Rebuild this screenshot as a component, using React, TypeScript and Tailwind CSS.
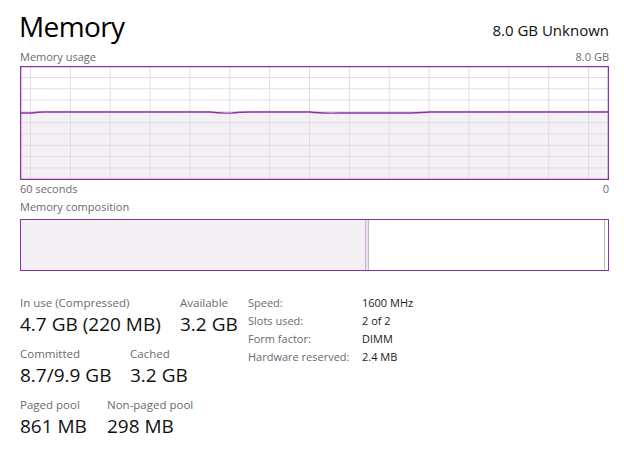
import React from 'react';

const PURPLE = '#8b2fa6';

const UsageChart: React.FC = () => {
  const w = 589;
  const h = 114;
  const vLines = Array.from({ length: 15 }, (_, i) => 10.5 + i * 39.86);
  const hLines = Array.from({ length: 9 }, (_, i) => 11.5 + i * 11.3);
  const line =
    'M1 47 L12 47 Q18 46 24 46 L190 46 Q200 47.5 212 47 Q220 46 230 46 L290 46 Q300 47.5 320 47 L390 47 Q405 46.5 410 46 L588 46';
  return (
    <svg width={w} height={h} viewBox={`0 0 ${w} ${h}`} className="block">
      <rect x="0" y="0" width={w} height={h} fill="#ffffff" />
      <path d={`${line} L588 113 L1 113 Z`} fill="#f4f1f5" />
      {vLines.map(x => (
        <line key={`v${x}`} x1={x} y1={1} x2={x} y2={h - 1} stroke="#e3dbe6" strokeWidth="1" />
      ))}
      {hLines.map(y => (
        <line key={`h${y}`} x1={1} y1={y} x2={w - 1} y2={y} stroke="#e3dbe6" strokeWidth="1" />
      ))}
      <path d={line} fill="none" stroke={PURPLE} strokeWidth="1.3" />
      <rect x="0.6" y="0.6" width={w - 1.2} height={h - 1.2} fill="none" stroke={PURPLE} strokeWidth="1.3" />
    </svg>
  );
};

const Stat: React.FC<{ label: string; value: string; className?: string }> = ({ label, value, className }) => (
  <div className={className}>
    <div className="text-[11.5px] leading-[16px] text-[#6b6b6b]">{label}</div>
    <div className="text-[19px] leading-[26px] text-[#111]">{value}</div>
  </div>
);

const Row: React.FC<{ label: string; value: string }> = ({ label, value }) => (
  <div className="flex h-[18px] items-center text-[11px]">
    <span className="w-[114px] text-[#6b6b6b]">{label}</span>
    <span className="text-[#1a1a1a]">{value}</span>
  </div>
);

export default function App() {
  return (
    <div
      className="w-[624px] h-[451px] bg-white pl-[20px] pr-[15px] overflow-hidden"
      style={{ fontFamily: '"Segoe UI", "Open Sans", "Noto Sans", sans-serif' }}
    >
      <div className="flex items-end justify-between h-[44px] pt-[8px]">
        <div className="text-[28px] leading-[36px] tracking-[-0.6px] text-black -ml-[1px]">Memory</div>
        <div className="text-[15px] leading-[20px] text-[#111] mb-[4px]">8.0 GB Unknown</div>
      </div>
      <div className="flex justify-between text-[11px] leading-[16px] text-[#6b6b6b] h-[22px] pt-[5px]">
        <span>Memory usage</span>
        <span>8.0 GB</span>
      </div>
      <UsageChart />
      <div className="flex justify-between text-[11px] leading-[16px] text-[#6b6b6b] pt-[1px]">
        <span>60 seconds</span>
        <span>0</span>
      </div>
      <div className="text-[11px] leading-[16px] text-[#6b6b6b] pt-[2px] h-[22px]">Memory composition</div>
      <div className="flex h-[52px] border-[1.3px] border-[#8b2fa6] w-[589px]">
        <div className="w-[345px] bg-[#f2f0f3] border-r border-[#c9b3d1]" />
        <div className="w-[3px] bg-[#ece2ef] border-r border-[#c9b3d1]" />
        <div className="flex-1 bg-white border-r border-[#bdbdbd]" />
        <div className="w-[3px] bg-white" />
      </div>
      <div className="flex pt-[24px]">
        <div className="w-[228px] flex flex-col gap-[9px]">
          <div className="flex">
            <Stat label="In use (Compressed)" value="4.7 GB (220 MB)" className="w-[160px]" />
            <Stat label="Available" value="3.2 GB" />
          </div>
          <div className="flex">
            <Stat label="Committed" value="8.7/9.9 GB" className="w-[110px]" />
            <Stat label="Cached" value="3.2 GB" />
          </div>
          <div className="flex">
            <Stat label="Paged pool" value="861 MB" className="w-[87px]" />
            <Stat label="Non-paged pool" value="298 MB" />
          </div>
        </div>
        <div className="mt-[-1px]">
          <Row label="Speed:" value="1600 MHz" />
          <Row label="Slots used:" value="2 of 2" />
          <Row label="Form factor:" value="DIMM" />
          <Row label="Hardware reserved:" value="2.4 MB" />
        </div>
      </div>
    </div>
  );
}
